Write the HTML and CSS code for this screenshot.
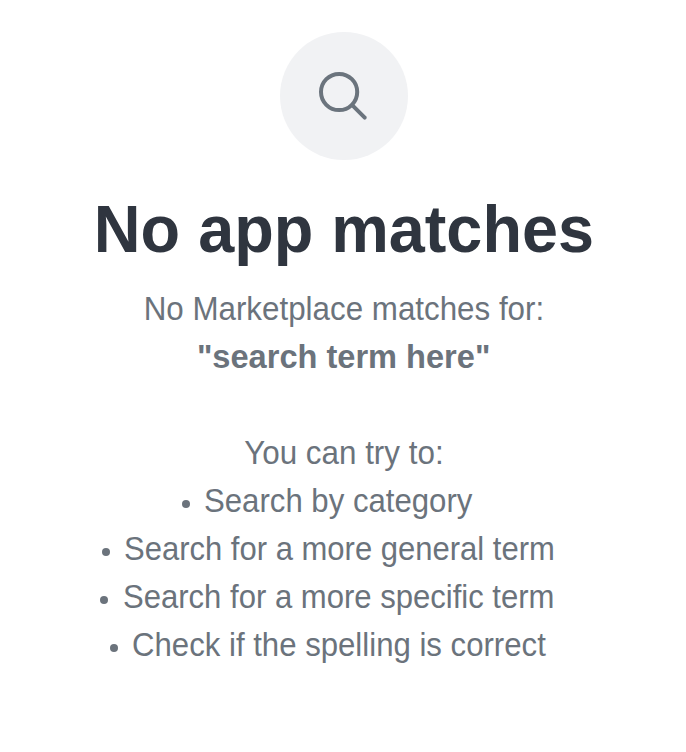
FILE: index.html
```html
<!DOCTYPE html>
<html lang="en">
<head>
<meta charset="utf-8">
<title>No app matches</title>
<link rel="stylesheet" href="styles.css">
</head>
<body>
<main class="empty">
<div class="badge"><svg class="icon" viewBox="0 0 64 64" fill="none"><circle cx="27.1" cy="28" r="18.1"/><path d="M40.2 41.2 52.7 53.7"/></svg></div>
<h1 class="title">No app matches</h1>
<p class="line intro">No Marketplace matches for:</p>
<p class="line term">"search term here"</p>
<p class="line hint">You can try to:</p>
<ul class="tips">
<li class="tip category"><span class="label">Search by category</span></li>
<li class="tip general"><span class="label">Search for a more general term</span></li>
<li class="tip specific"><span class="label">Search for a more specific term</span></li>
<li class="tip spelling"><span class="label">Check if the spelling is correct</span></li>
</ul>
</main>
</body>
</html>
```
FILE: styles.css
```css
body { margin: 0; background: #fff; font-family: "Liberation Sans", Arial, sans-serif; }
.empty { display: flex; flex-direction: column; align-items: center; padding: 32px 0 0 1px; font-size: 33px; line-height: 48px; color: #6b737c; white-space: nowrap; }
.badge { width: 128px; height: 128px; border-radius: 50%; background: #f1f2f4; display: flex; align-items: center; justify-content: center; }
.icon { width: 64px; height: 64px; stroke: #6b747d; stroke-width: 4; stroke-linecap: round; }
.title { margin: 29px 0 16px; font-size: 66px; line-height: 80px; color: #2f353f; transform: scaleX(.981); }
.line { margin: 0; }
.intro { transform: scaleX(.9495); }
.term { font-weight: 700; transform: scaleX(.987); }
.hint { margin-top: 48px; transform: scaleX(.951); }
.tips { margin: 0; padding: 0; list-style: none; align-self: stretch; }
.tip { display: flex; align-items: center; }
.tip::before { content: ""; width: 8px; height: 8px; border-radius: 50%; background: currentColor; margin: 6px 14px 0 0; }
.label { transform-origin: left; transform: scaleX(.943); }
.category { padding-left: 181px; }
.category .label { transform: scaleX(.944); }
.general { padding-left: 101px; }
.general .label { transform: scaleX(.9395); }
.specific { padding-left: 99px; }
.specific::before { margin-right: 15px; }
.specific .label { transform: scaleX(.941); }
.spelling { padding-left: 109px; }
.spelling .label { transform: scaleX(.944); }
```
